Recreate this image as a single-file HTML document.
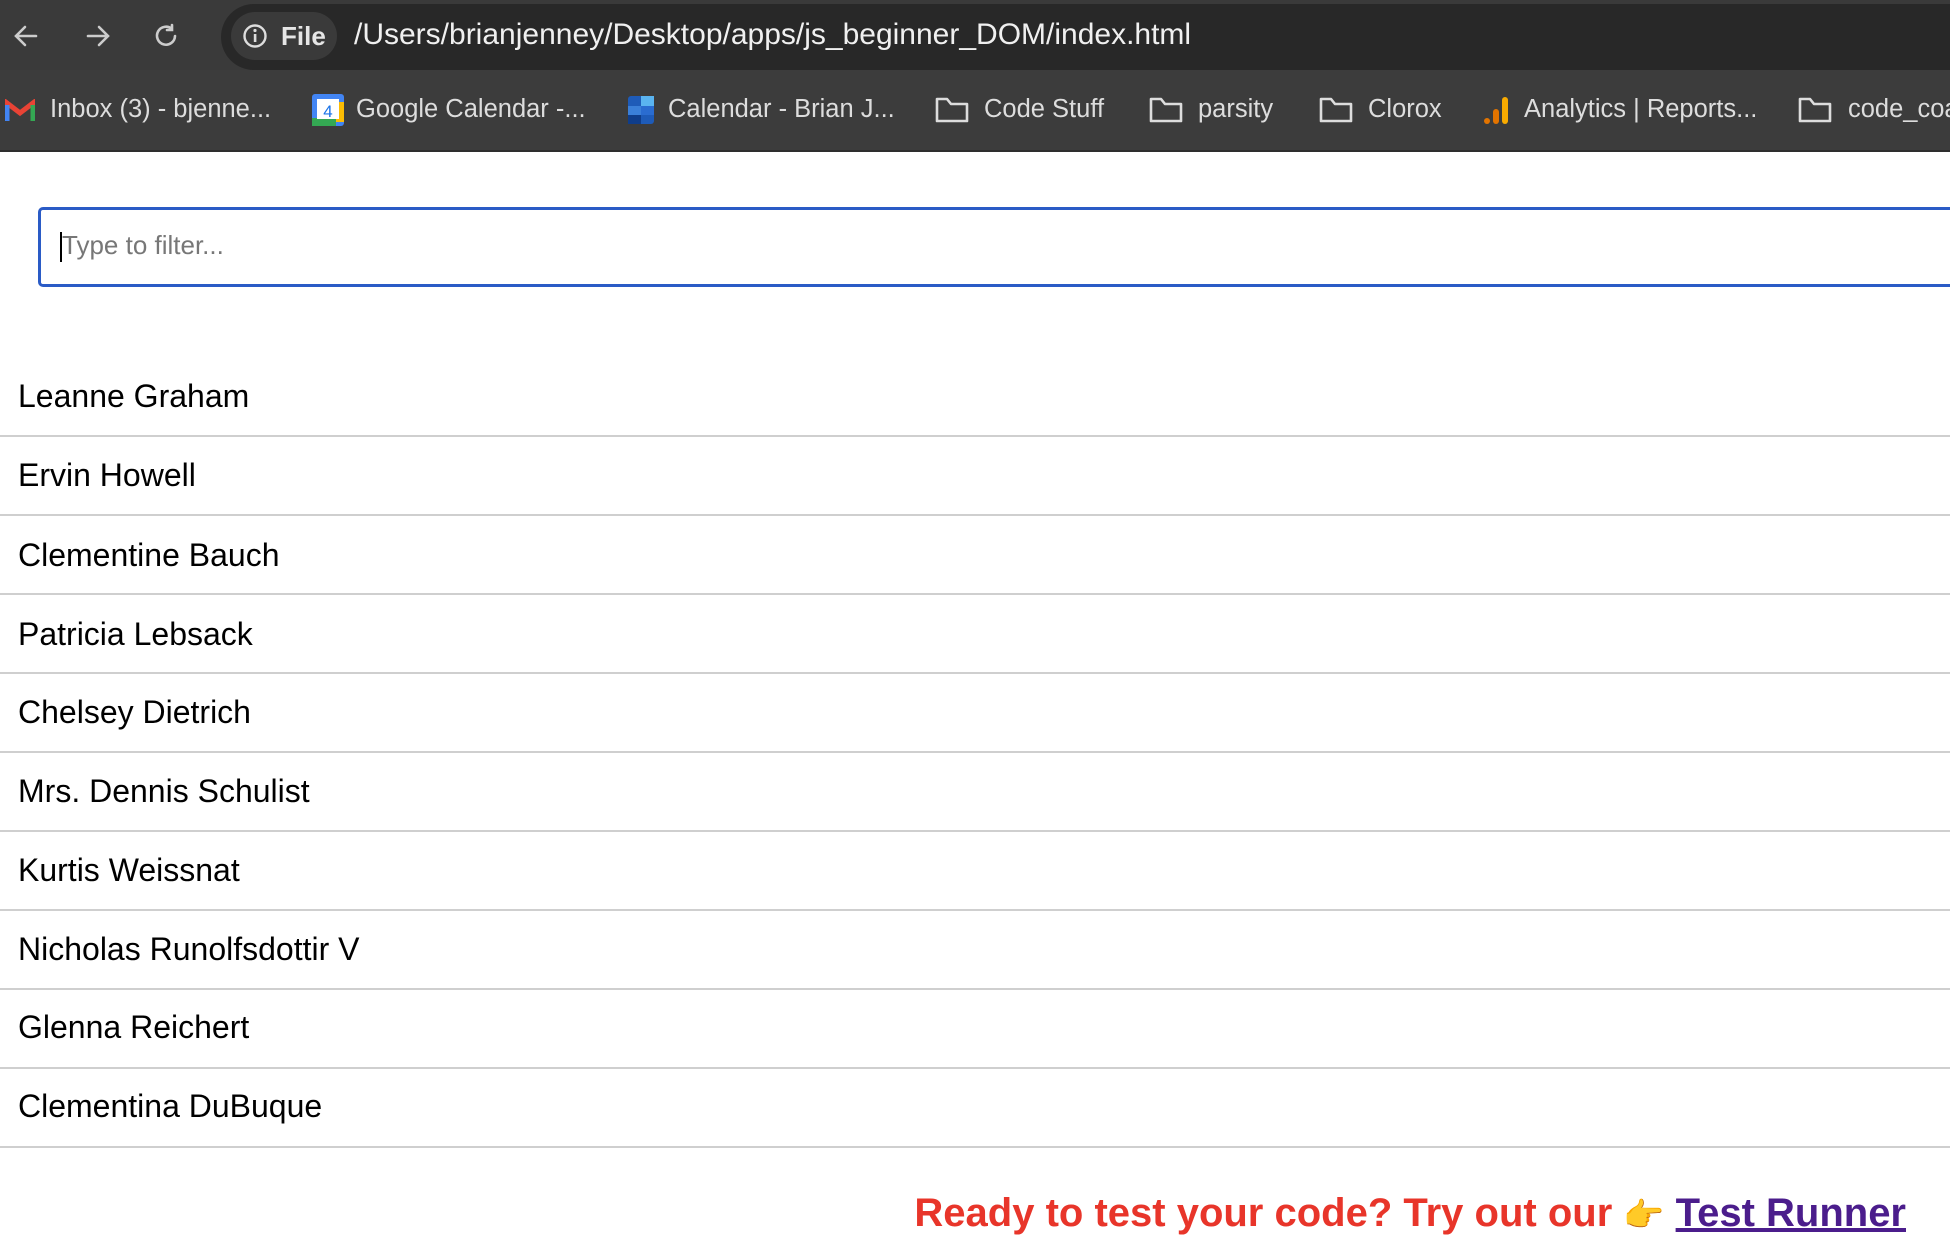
<!DOCTYPE html>
<html><head><meta charset="utf-8"><style>
*{margin:0;padding:0;box-sizing:border-box}
body{width:1950px;height:1250px;overflow:hidden;background:#fff;font-family:"Liberation Sans",sans-serif;position:relative}
.top{position:absolute;left:0;top:0;width:1950px;height:70px;background:#3a3a3a}
.pill{position:absolute;left:221px;top:4px;width:1900px;height:66px;background:#282828;border-radius:33px}
.chip{position:absolute;left:231px;top:12px;width:106px;height:48px;background:#3a3a3a;border-radius:24px}
.bm{position:absolute;left:0;top:70px;width:1950px;height:82px;background:#3c3c3c;border-bottom:2px solid #2e2e2e}
.t{position:absolute;color:#ddd;white-space:nowrap}
.inp{position:absolute;left:38px;top:207px;width:2000px;height:80px;border:3px solid #2a5bc6;border-radius:5px}
.ph{position:absolute;left:62px;top:230px;font-size:26px;color:#777}
.cur{position:absolute;left:60px;top:232px;width:2px;height:30px;background:#000}
.li{position:absolute;left:0;width:1950px;height:79px;border-bottom:2px solid #cfcfcf;font-size:32px;color:#000;padding-left:18px}
.foot{position:absolute;right:44px;top:1191px;font-size:40px;font-weight:bold;color:#e8352a;white-space:nowrap}
.foot a{color:#4b1d8c;text-decoration:underline}
</style></head><body>
<div class="top"></div>
<div class="pill"></div>
<div class="chip"></div>
<svg style="position:absolute;left:12px;top:22px" width="190" height="30" viewBox="0 0 190 30">
<g stroke="#ccc" stroke-width="2.6" fill="none" stroke-linecap="round">
<path d="M24 14H4M13 5l-9 9 9 9"/>
<path d="M76 14h20M87 5l9 9-9 9"/>
<path d="M160 7a9 9 0 1 0 3 7M160 3v5h-5"/>
</g>
</svg>
<svg style="position:absolute;left:242px;top:23px" width="26" height="26"><circle cx="13" cy="13" r="10.5" stroke="#ddd" stroke-width="2.4" fill="none"/><rect x="11.8" y="11" width="2.6" height="8" fill="#ddd"/><circle cx="13" cy="7.5" r="1.6" fill="#ddd"/></svg>
<div class="t" style="left:281px;top:21px;font-size:26px;font-weight:bold;color:#e6e6e6">File</div>
<div class="t" style="left:354px;top:18px;font-size:30px;color:#f0f0f0">/Users/brianjenney/Desktop/apps/js_beginner_DOM/index.html</div>
<div class="bm"></div>
<svg style="position:absolute;left:5px;top:99px" width="30" height="24"><path d="M2 22V4l13 10L28 4v18" stroke="#e84335" stroke-width="5" fill="none"/><path d="M2 22V6" stroke="#4285f4" stroke-width="5"/><path d="M28 22V6" stroke="#34a853" stroke-width="5"/></svg>
<div class="t" style="left:50px;top:95px;font-size:25.5px">Inbox (3) - bjenne...</div>
<svg style="position:absolute;left:312px;top:94px" width="32" height="32"><rect x="0" y="0" width="32" height="32" rx="3" fill="#4285f4"/><rect x="0" y="24" width="24" height="8" fill="#34a853"/><rect x="24" y="8" width="8" height="20" fill="#fbbc04"/><rect x="5" y="5" width="22" height="20" fill="#fff"/><text x="16" y="23" font-size="17" fill="#1a73e8" text-anchor="middle" font-family="Liberation Sans">4</text></svg>
<div class="t" style="left:356px;top:95px;font-size:25.5px">Google Calendar -...</div>
<svg style="position:absolute;left:628px;top:96px" width="26" height="28"><rect width="26" height="28" rx="3" fill="#1e5bb8"/><rect x="13" y="0" width="13" height="10" fill="#5ab4f0"/><rect x="0" y="10" width="13" height="9" fill="#3a7fd8"/><rect x="13" y="10" width="13" height="9" fill="#2a6cd0"/><rect x="0" y="19" width="13" height="9" fill="#0f3d8a"/></svg>
<div class="t" style="left:668px;top:95px;font-size:25.5px">Calendar - Brian J...</div>
<svg style="position:absolute;left:935px;top:97px" width="600" height="28"><g stroke="#ddd" stroke-width="2.6" fill="none" stroke-linejoin="round"><path d="M2 2h10l4 5h16v17H2z"/><path d="M216 2h10l4 5h16v17H216z"/><path d="M386 2h10l4 5h16v17H386z"/></g></svg>
<div class="t" style="left:984px;top:95px;font-size:25.5px">Code Stuff</div>
<div class="t" style="left:1198px;top:95px;font-size:25.5px">parsity</div>
<div class="t" style="left:1368px;top:95px;font-size:25.5px">Clorox</div>
<svg style="position:absolute;left:1482px;top:95px" width="30" height="30"><circle cx="5" cy="26" r="3" fill="#e37400"/><rect x="11" y="14" width="6" height="15" rx="3" fill="#e37400"/><rect x="20" y="2" width="6" height="27" rx="3" fill="#f9ab00"/></svg>
<div class="t" style="left:1524px;top:95px;font-size:25.5px">Analytics | Reports...</div>
<svg style="position:absolute;left:1798px;top:97px" width="34" height="28"><path d="M2 2h10l4 5h16v17H2z" stroke="#ddd" stroke-width="2.6" fill="none" stroke-linejoin="round"/></svg>
<div class="t" style="left:1848px;top:95px;font-size:25.5px">code_coa</div>

<div class="inp"></div>
<div class="cur"></div>
<div class="ph">Type to filter...</div>

<div class="li" style="top:358px;padding-top:20px">Leanne Graham</div>
<div class="li" style="top:437px;padding-top:20px">Ervin Howell</div>
<div class="li" style="top:516px;padding-top:21px">Clementine Bauch</div>
<div class="li" style="top:595px;padding-top:21px">Patricia Lebsack</div>
<div class="li" style="top:674px;padding-top:20px">Chelsey Dietrich</div>
<div class="li" style="top:753px;padding-top:20px">Mrs. Dennis Schulist</div>
<div class="li" style="top:832px;padding-top:20px">Kurtis Weissnat</div>
<div class="li" style="top:911px;padding-top:20px">Nicholas Runolfsdottir V</div>
<div class="li" style="top:990px;padding-top:19px">Glenna Reichert</div>
<div class="li" style="top:1069px;padding-top:19px">Clementina DuBuque</div>

<div class="foot">Ready to test your code? Try out our <span style="font-size:33px">👉</span> <a>Test Runner</a></div>
</body></html>
